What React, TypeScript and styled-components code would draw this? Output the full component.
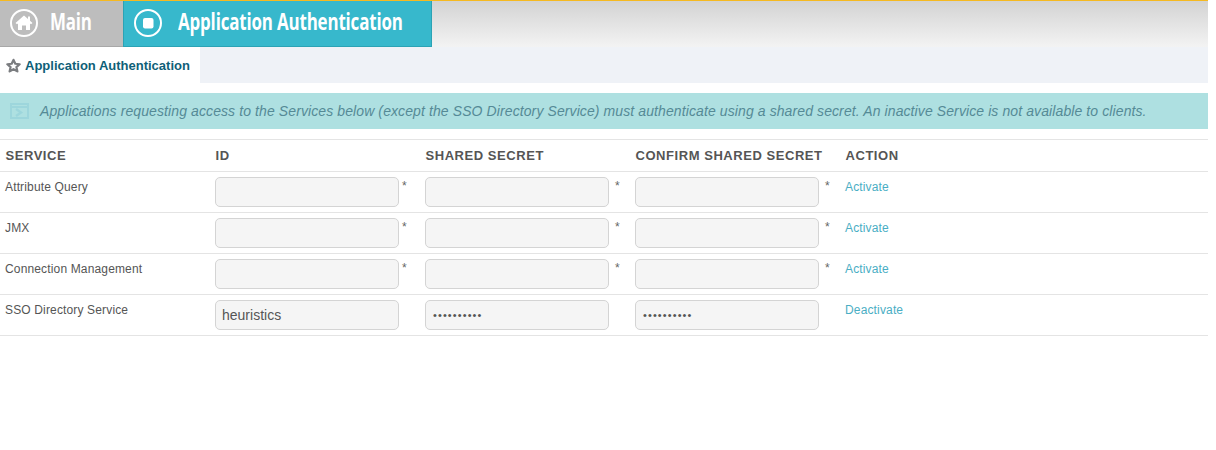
import React from 'react';
import styled, { createGlobalStyle } from 'styled-components';

const GlobalStyle = createGlobalStyle`
  html, body {
    margin: 0;
    padding: 0;
    background: #fff;
  }
  body {
    font-family: "Liberation Sans", Arial, sans-serif;
    overflow: hidden;
  }
  * {
    box-sizing: border-box;
  }
`;

const Page = styled.div`
  width: 1208px;
  height: 450px;
`;
const TopBar = styled.div`
  display: flex;
  height: 47px;
  border-top: 1px solid #f5b921;
  background: linear-gradient(to bottom, #d3d3d3 0%, #f3f3f3 100%);
`;
const MainTab = styled.div`
  display: flex;
  align-items: center;
  flex: none;
  width: 123px;
  height: 46px;
  padding: 0 0 2px 10px;
  gap: 12px;
  background: #bdbdbd;
  border-bottom: 1px solid #a8a8a8;
`;
const ActiveTab = styled.div`
  display: flex;
  align-items: center;
  flex: none;
  width: 309px;
  height: 46px;
  padding: 0 0 2px 10px;
  gap: 16px;
  background: #37b8cc;
  border-left: 1px solid #2ba3b5;
  border-right: 1px solid #2ba3b5;
  border-bottom: 1px solid #2ba3b5;
`;
const TabIcon = styled.svg`
  flex: none;
  width: 28px;
  height: 28px;
`;
const TabLabel = styled.span`
  display: inline-block;
  flex: none;
  margin-bottom: 4px;
  color: #fff;
  font-family: "Open Sans", sans-serif;
  font-size: 23px;
  font-weight: 700;
  line-height: 30px;
  letter-spacing: -0.2px;
  white-space: nowrap;
  transform: scaleX(0.735);
  transform-origin: left center;
`;
const SubBar = styled.div`
  height: 36px;
  background: #eff2f7;
`;
const SubTab = styled.div`
  display: flex;
  align-items: center;
  width: 200px;
  height: 36px;
  padding-left: 6px;
  gap: 4px;
  background: #fff;
  color: #0f5f78;
  font-size: 13px;
  font-weight: 700;
`;
const InfoBanner = styled.div`
  display: flex;
  align-items: center;
  height: 36px;
  margin-top: 10px;
  padding-left: 10px;
  gap: 11px;
  background: #aee0e1;
  color: #558a96;
  font-size: 14px;
  font-style: italic;
  letter-spacing: 0.1px;
  white-space: nowrap;
`;
const Table = styled.table`
  width: 100%;
  margin-top: 10px;
  border-collapse: collapse;
  table-layout: fixed;
`;
const HeadCell = styled.th`
  height: 32px;
  padding: 0 0 0 5.5px;
  border-top: 1px solid #e4e4e4;
  border-bottom: 1px solid #e4e4e4;
  color: #555;
  font-size: 13px;
  font-weight: 700;
  letter-spacing: 0.55px;
  text-align: left;
  white-space: nowrap;
`;
const Cell = styled.td`
  height: 41px;
  padding: 7px 0 0 5px;
  border-bottom: 1px solid #e4e4e4;
  color: #555;
  font-size: 12px;
  letter-spacing: 0.15px;
  line-height: 16px;
  vertical-align: top;
`;
const FieldCell = styled(Cell)`
  padding-top: 5px;
`;
const FieldWrap = styled.div<{ $gap: number }>`
  display: flex;
  align-items: flex-start;
  gap: ${({ $gap }) => $gap}px;
`;
const Field = styled.input`
  width: 184px;
  height: 30px;
  padding: 0 6px;
  border: 1px solid #d4d4d4;
  border-radius: 5px;
  background: #f5f5f5;
  color: #555;
  font-family: "Liberation Sans", Arial, sans-serif;
  font-size: 14px;
  outline: none;
`;
const SecretField = styled(Field)`
  padding: 0 7px;
  font-size: 11px;
  letter-spacing: 1.1px;
`;
const Required = styled.span`
  margin-top: 1px;
  color: #666;
  font-size: 12px;
`;
const ActionLink = styled.a`
  color: #4aaec4;
  font-size: 12px;
  letter-spacing: 0.15px;
  text-decoration: none;
`;

const services = [
  { name: 'Attribute Query', action: 'Activate', id: '', secret: '', required: true },
  { name: 'JMX', action: 'Activate', id: '', secret: '', required: true },
  { name: 'Connection Management', action: 'Activate', id: '', secret: '', required: true },
  { name: 'SSO Directory Service', action: 'Deactivate', id: 'heuristics', secret: 'secretsecr', required: false },
];

function HomeIcon() {
  return (
    <TabIcon viewBox="0 0 28 28">
      <circle cx="14" cy="14" r="13" fill="none" stroke="#fff" strokeWidth="2" />
      <path d="M14 6.5 L18 10 V7.5 H20 V11.8 L22.5 14 L21 15.2 L20 14.4 V21 H16 V16.5 H12 V21 H8 V14.4 L7 15.2 L5.5 14 Z" fill="#fff" />
    </TabIcon>
  );
}

function StopIcon() {
  return (
    <TabIcon viewBox="0 0 28 28">
      <circle cx="14" cy="14" r="13" fill="none" stroke="#fff" strokeWidth="2" />
      <rect x="9" y="9" width="10.5" height="10.5" rx="2" fill="#fff" />
    </TabIcon>
  );
}

function StarIcon() {
  return (
    <svg width="15" height="15" viewBox="0 0 24 24">
      <path
        d="M12 3 L14.9 9.2 L21.8 10 L16.7 14.6 L18.2 21.4 L12 17.9 L5.8 21.4 L7.3 14.6 L2.2 10 L9.1 9.2 Z"
        fill="none"
        stroke="#7b7d80"
        strokeWidth="3.6"
        strokeLinejoin="round"
      />
    </svg>
  );
}

function ConsoleIcon() {
  return (
    <svg width="19" height="16" viewBox="0 0 19 16">
      <rect x="1" y="1" width="17" height="14" fill="none" stroke="#9dd6dc" strokeWidth="2" />
      <path d="M1 4 H18" stroke="#9dd6dc" strokeWidth="2" />
      <path d="M6 6 L11 9.5 L6 13" fill="none" stroke="#9dd6dc" strokeWidth="2.4" />
    </svg>
  );
}

function App() {
  return (
    <Page>
      <GlobalStyle />
      <TopBar>
        <MainTab>
          <HomeIcon />
          <TabLabel>Main</TabLabel>
        </MainTab>
        <ActiveTab>
          <StopIcon />
          <TabLabel>Application Authentication</TabLabel>
        </ActiveTab>
      </TopBar>
      <SubBar>
        <SubTab>
          <StarIcon />
          Application Authentication
        </SubTab>
      </SubBar>
      <InfoBanner>
        <ConsoleIcon />
        Applications requesting access to the Services below (except the SSO Directory Service) must authenticate using a shared secret. An inactive Service is not available to clients.
      </InfoBanner>
      <Table>
        <colgroup>
          <col width="210" />
          <col width="210" />
          <col width="210" />
          <col width="210" />
          <col />
        </colgroup>
        <thead>
          <tr>
            <HeadCell>SERVICE</HeadCell>
            <HeadCell>ID</HeadCell>
            <HeadCell>SHARED SECRET</HeadCell>
            <HeadCell>CONFIRM SHARED SECRET</HeadCell>
            <HeadCell>ACTION</HeadCell>
          </tr>
        </thead>
        <tbody>
          {services.map((s) => (
            <tr key={s.name}>
              <Cell>{s.name}</Cell>
              <FieldCell>
                <FieldWrap $gap={3}>
                  <Field type="text" defaultValue={s.id} />
                  {s.required && <Required>*</Required>}
                </FieldWrap>
              </FieldCell>
              <FieldCell>
                <FieldWrap $gap={6}>
                  <SecretField type="password" defaultValue={s.secret} />
                  {s.required && <Required>*</Required>}
                </FieldWrap>
              </FieldCell>
              <FieldCell>
                <FieldWrap $gap={6}>
                  <SecretField type="password" defaultValue={s.secret} />
                  {s.required && <Required>*</Required>}
                </FieldWrap>
              </FieldCell>
              <Cell>
                <ActionLink href="#">{s.action}</ActionLink>
              </Cell>
            </tr>
          ))}
        </tbody>
      </Table>
    </Page>
  );
}

export default App;
